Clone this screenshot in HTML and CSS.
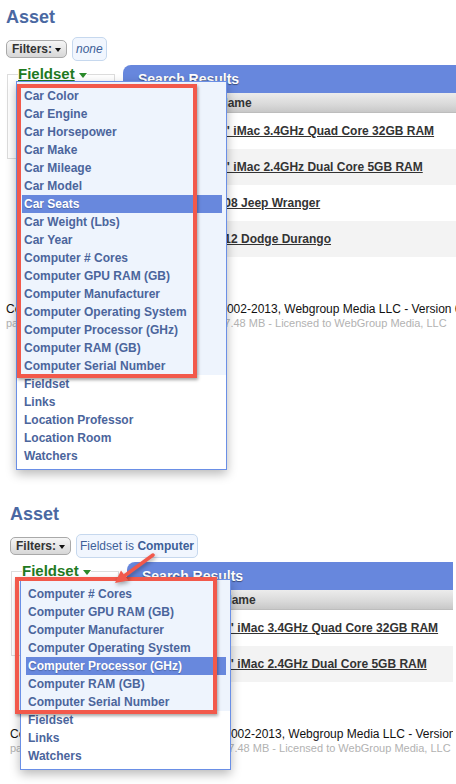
FILE: index.html
```html
<!DOCTYPE html>
<html>
<head>
<meta charset="utf-8">
<title>Asset</title>
<link rel="stylesheet" href="styles.css">
</head>
<body>
<div class="shot shot-1">
  <h1 class="title">Asset</h1>
  <div class="filters">
    <span class="btn-filters">Filters:<span class="caret"></span></span>
    <span class="pill"><em>none</em></span>
  </div>
  <div class="main">
    <fieldset class="fs">
      <legend><span class="legend-text">Fieldset</span><span class="caret-green"></span></legend>
      <div class="fs-body"></div>
    </fieldset>
    <div class="results">
      <div class="res-head">Search Results</div>
      <div class="col-head"><span class="col-name">Name</span></div>
      <div class="row"><a class="link">27" iMac 3.4GHz Quad Core 32GB RAM</a></div>
      <div class="row alt"><a class="link">27" iMac 2.4GHz Dual Core 5GB RAM</a></div>
      <div class="row"><a class="link">2008 Jeep Wranger</a></div>
      <div class="row alt"><a class="link">2012 Dodge Durango</a></div>
    </div>
  </div>
  <div class="footer">
    <div class="copy">Cerb6™ Business Edition - Copyright © 2002-2013, Webgroup Media LLC - Version 6.4.0</div>
    <div class="gen">page generated in: 0.325 seconds; memory: 7.48 MB - Licensed to WebGroup Media, LLC</div>
  </div>

  <div class="menu menu-1">
    <div class="group group-tint">
      <div class="item">Car Color</div>
      <div class="item">Car Engine</div>
      <div class="item">Car Horsepower</div>
      <div class="item">Car Make</div>
      <div class="item">Car Mileage</div>
      <div class="item">Car Model</div>
      <div class="item active">Car Seats</div>
      <div class="item">Car Weight (Lbs)</div>
      <div class="item">Car Year</div>
      <div class="item">Computer # Cores</div>
      <div class="item">Computer GPU RAM (GB)</div>
      <div class="item">Computer Manufacturer</div>
      <div class="item">Computer Operating System</div>
      <div class="item">Computer Processor (GHz)</div>
      <div class="item">Computer RAM (GB)</div>
      <div class="item">Computer Serial Number</div>
    </div>
    <div class="group group-plain">
      <div class="item">Fieldset</div>
      <div class="item">Links</div>
      <div class="item">Location Professor</div>
      <div class="item">Location Room</div>
      <div class="item">Watchers</div>
    </div>
  </div>
  <div class="redbox redbox-1"></div>
</div>

<div class="shot shot-2">
  <h1 class="title">Asset</h1>
  <div class="filters">
    <span class="btn-filters">Filters:<span class="caret"></span></span>
    <span class="pill">Fieldset is <b>Computer</b></span>
  </div>
  <div class="main">
    <fieldset class="fs">
      <legend><span class="legend-text">Fieldset</span><span class="caret-green"></span></legend>
      <div class="fs-body"></div>
    </fieldset>
    <div class="results">
      <div class="res-head">Search Results</div>
      <div class="col-head"><span class="col-name">Name</span></div>
      <div class="row"><a class="link">27" iMac 3.4GHz Quad Core 32GB RAM</a></div>
      <div class="row alt"><a class="link">27" iMac 2.4GHz Dual Core 5GB RAM</a></div>
    </div>
  </div>
  <div class="footer">
    <div class="copy">Cerb6™ Business Edition - Copyright © 2002-2013, Webgroup Media LLC - Version 6.4.0</div>
    <div class="gen">page generated in: 0.325 seconds; memory: 7.48 MB - Licensed to WebGroup Media, LLC</div>
  </div>

  <div class="menu menu-2">
    <div class="group group-tint">
      <div class="item">Computer # Cores</div>
      <div class="item">Computer GPU RAM (GB)</div>
      <div class="item">Computer Manufacturer</div>
      <div class="item">Computer Operating System</div>
      <div class="item active">Computer Processor (GHz)</div>
      <div class="item">Computer RAM (GB)</div>
      <div class="item">Computer Serial Number</div>
    </div>
    <div class="group group-plain">
      <div class="item">Fieldset</div>
      <div class="item">Links</div>
      <div class="item">Watchers</div>
    </div>
  </div>
  <div class="redbox redbox-2"></div>
  <svg class="arrow" width="453" height="287" viewBox="0 0 453 287">
    <line x1="153" y1="58" x2="125" y2="78.5" stroke="#f2594b" stroke-width="3.5" stroke-linecap="round"/>
    <polygon points="115,86 128.5,83.5 121,73.5" fill="#f2594b"/>
  </svg>
</div>
</body>
</html>
```

FILE: styles.css
```css
* { box-sizing: border-box; }

html, body {
  margin: 0;
  padding: 0;
  background: #ffffff;
}

body {
  font-family: "Liberation Sans", Arial, Helvetica, sans-serif;
  font-size: 12px;
  color: #333333;
  width: 456px;
  overflow: hidden;
}

.shot {
  position: relative;
  overflow: hidden;
  background: #ffffff;
}

.shot-1 {
  width: 456px;
  height: 497px;
  padding-left: 6px;
}

.shot-2 {
  width: 453px;
  height: 287px;
  padding-left: 10px;
}

.title {
  margin: 6px 0 0 0;
  font-size: 18px;
  line-height: 22px;
  font-weight: bold;
  color: #4a68a2;
}

.filters {
  margin-top: 9px;
  height: 24px;
  display: flex;
  align-items: center;
}

.btn-filters {
  display: inline-flex;
  align-items: center;
  height: 18px;
  padding: 0 5px 0 5px;
  border: 1px solid #a9a9a9;
  border-radius: 5px;
  background: linear-gradient(#f6f6f6, #d7d7d7);
  font-weight: bold;
  font-size: 12px;
  line-height: 16px;
  color: #333333;
}

.caret {
  display: inline-block;
  width: 0;
  height: 0;
  margin-left: 3px;
  margin-top: 2px;
  border-left: 3.5px solid transparent;
  border-right: 3.5px solid transparent;
  border-top: 4px solid #111111;
}

.pill {
  display: inline-block;
  height: 24px;
  margin-left: 5px;
  padding: 0 3px;
  border: 1px solid #c6d8ee;
  border-radius: 5px;
  background: #f1f6fe;
  line-height: 22px;
  font-size: 12px;
  color: #3d5f98;
}

.pill em { font-style: italic; }
.pill b { font-weight: bold; }

.main {
  margin-top: 4px;
  display: flex;
  align-items: flex-start;
}

.fs {
  flex: none;
  width: 108px;
  margin: 0 0 0 1px;
  padding: 0 10px;
  border: 1px solid #dddddd;
  min-width: 0;
}

.fs legend {
  padding: 0;
  height: 18px;
  line-height: 18px;
  font-size: 15px;
  font-weight: bold;
  color: #1f7a1f;
  display: flex;
  align-items: center;
}

.legend-text {
  text-decoration: underline;
}

.caret-green {
  display: inline-block;
  width: 0;
  height: 0;
  margin-left: 4px;
  margin-top: 3px;
  border-left: 4px solid transparent;
  border-right: 4px solid transparent;
  border-top: 5px solid #2a8a2a;
}

.fs-body {
  height: 75px;
}

.results {
  flex: none;
  width: 340px;
  margin-left: 8px;
}

.res-head {
  height: 28px;
  line-height: 28px;
  padding-left: 15px;
  border-radius: 8px 0 0 0;
  background: #6787dd;
  color: #ffffff;
  font-size: 14px;
  font-weight: bold;
  text-shadow: 0 1px 1px rgba(0, 0, 0, 0.45);
}

.col-head {
  height: 20px;
  line-height: 20px;
  padding-left: 96px;
  background: linear-gradient(#ececec, #d9d9d9 60%, #c8c8c8);
  border-bottom: 1px solid #bdbdbd;
  font-weight: bold;
  font-size: 12px;
  color: #333333;
}

.row {
  height: 36px;
  line-height: 36px;
  padding-left: 88px;
  background: #ffffff;
  white-space: nowrap;
}

.row.alt {
  background: #f3f3f3;
}

.link {
  font-weight: bold;
  font-size: 12px;
  color: #333333;
  text-decoration: underline;
}

.footer {
  margin-top: 45px;
  white-space: nowrap;
}

.copy {
  font-size: 12px;
  line-height: 15px;
  color: #111111;
}

.gen {
  font-size: 11px;
  line-height: 13px;
  color: #b2b2b2;
}

/* dropdown menu overlay */
.menu {
  position: absolute;
  width: 211px;
  border: 1px solid #6a8fe6;
  background: #ffffff;
  box-shadow: 0 4px 10px rgba(0, 0, 0, 0.28);
}

.menu-1 { left: 16px; top: 81px; }
.menu-2 { left: 20px; top: 82px; }

.group-tint {
  background: #eef4fd;
  padding: 5px 4px 0 5px;
}

.group-plain {
  padding: 0 4px 4px 5px;
}

.item {
  height: 18px;
  line-height: 18px;
  padding-left: 2px;
  font-size: 12px;
  font-weight: bold;
  color: #4b659c;
  white-space: nowrap;
}

.item.active {
  background: #6888dd;
  color: #ffffff;
  text-shadow: 0 1px 1px rgba(0, 0, 0, 0.25);
}

/* annotation overlays */
.redbox {
  position: absolute;
  border: 4px solid #f2594b;
  box-shadow: 1px 2px 3px rgba(0, 0, 0, 0.35);
}

.redbox-1 {
  left: 17px;
  top: 84px;
  width: 180px;
  height: 294px;
}

.redbox-2 {
  left: 15px;
  top: 80px;
  width: 202px;
  height: 137px;
}

.arrow {
  position: absolute;
  left: 0;
  top: 0;
  filter: drop-shadow(1px 2px 2px rgba(0, 0, 0, 0.35));
}
```
